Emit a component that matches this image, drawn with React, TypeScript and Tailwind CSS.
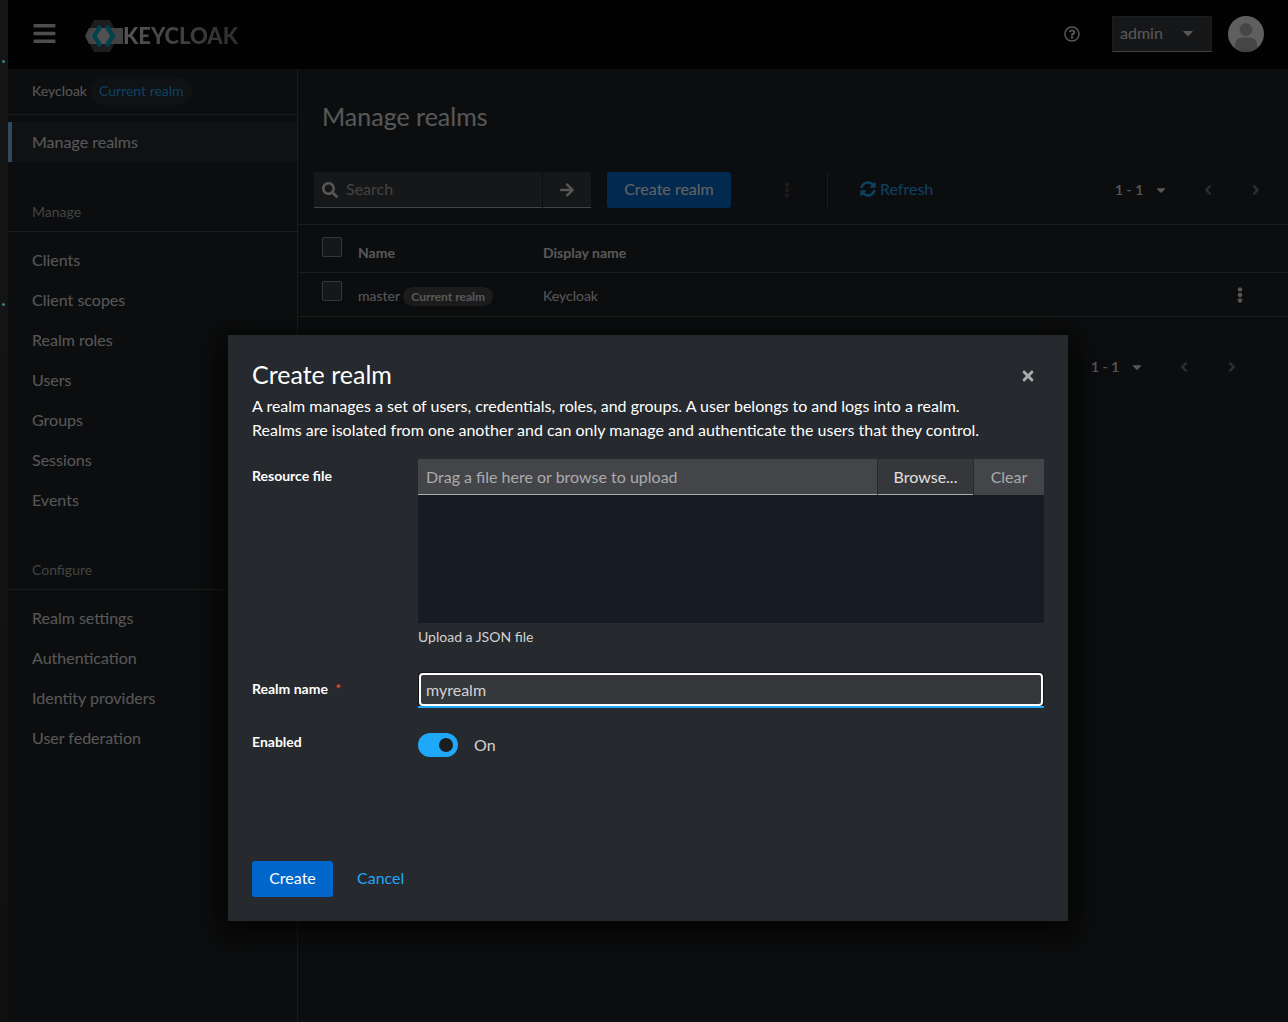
import { useState } from "react";
import {
  FaAngleLeft,
  FaAngleRight,
  FaArrowRight,
  FaBars,
  FaCaretDown,
  FaEllipsisV,
  FaRegQuestionCircle,
  FaSearch,
  FaSyncAlt,
  FaTimes,
} from "react-icons/fa";

const manageLinks = [
  "Clients",
  "Client scopes",
  "Realm roles",
  "Users",
  "Groups",
  "Sessions",
  "Events",
];

const configureLinks = [
  "Realm settings",
  "Authentication",
  "Identity providers",
  "User federation",
];

interface NavSectionProps {
  title: string;
  links: string[];
}

function Logo() {
  return (
    <a href="#" className="ml-7 flex items-center pt-1" aria-label="Keycloak">
      <svg width="38" height="32" viewBox="0 0 38 32">
        <path d="M9 0h16l8 16-8 16H9L1 16z" fill="#4b4b4b" />
        <path d="M4 8h34v16H4l-4-8z" fill="#a8a8a8" />
        <path d="M10 8h14l6 8-6 8H10l-5-8z" fill="#cfcfcf" />
        <path
          d="M14.500 7.500L9 16l5.500 8.500"
          fill="none"
          stroke="#00a5c4"
          strokeWidth="4.500"
          strokeLinejoin="round"
          strokeLinecap="round"
        />
        <path
          d="M22.500 7.500L28 16l-5.500 8.500"
          fill="none"
          stroke="#00a5c4"
          strokeWidth="4.500"
          strokeLinejoin="round"
          strokeLinecap="round"
        />
      </svg>
      <span className="bg-linear-to-r from-[#dcdcdc] to-[#707070] bg-clip-text font-[Lato,sans-serif] text-[22px] leading-8 font-black text-transparent">
        KEYCLOAK
      </span>
    </a>
  );
}

function Avatar() {
  return (
    <svg width="36" height="36" viewBox="0 0 36 36" role="img" aria-label="Avatar">
      <defs>
        <clipPath id="avatar">
          <circle cx="18" cy="18" r="18" />
        </clipPath>
      </defs>
      <g clipPath="url(#avatar)">
        <rect width="36" height="36" fill="#f5f5f5" />
        <circle cx="18" cy="13.500" r="6.500" fill="#b4b4b4" />
        <path d="M7 36v-7q0-7.500 7.500-7.500h7Q29 21.500 29 29v7z" fill="#b4b4b4" />
        <path d="M13 31v5h10v-5" fill="#a9a9a9" />
      </g>
    </svg>
  );
}

function NavSection({ title, links }: NavSectionProps) {
  return (
    <section className="pt-8">
      <h2 className="flex h-[38px] items-center border-b border-[#444548] px-6 pb-0.5 text-sm text-[#aaabac]">
        {title}
      </h2>
      <ul className="pt-2">
        {links.map((link) => (
          <li key={link}>
            <a href="#" className="block px-6 py-2 text-[#e0e0e0]">
              {link}
            </a>
          </li>
        ))}
      </ul>
    </section>
  );
}

function Pagination() {
  return (
    <div className="flex items-center text-[#e0e0e0]">
      <button className="flex w-[77px] items-center justify-between pr-4 pl-2 text-sm font-semibold">
        1 - 1
        <FaCaretDown size={14} />
      </button>
      <button
        disabled
        aria-label="Previous page"
        className="flex w-12 justify-center text-[#6a6e73]"
      >
        <FaAngleLeft size={16} />
      </button>
      <button
        disabled
        aria-label="Next page"
        className="flex w-12 justify-center text-[#6a6e73]"
      >
        <FaAngleRight size={16} />
      </button>
    </div>
  );
}

function Checkbox({ label }: { label: string }) {
  return (
    <input
      type="checkbox"
      aria-label={label}
      className="block size-5 appearance-none rounded-[2px] border border-[#8a8d90] bg-[#36373a]"
    />
  );
}

function CreateRealmModal() {
  const [name, setName] = useState("myrealm");
  const [enabled, setEnabled] = useState(true);

  return (
    <div className="absolute inset-y-0 right-0 left-2 flex items-start justify-center bg-[#030303]/62 pt-[335px]">
      <div
        role="dialog"
        aria-labelledby="modal-title"
        className="w-full max-w-[840px] bg-[#26292d] px-6 pt-[23px] pb-6 text-[#d2d2d2] shadow-[0_8px_24px_8px_rgba(3,3,3,0.7)]"
      >
        <header className="flex items-start justify-between">
          <h1 id="modal-title" className="text-[25px] leading-8 text-white">
            Create realm
          </h1>
          <button aria-label="Close" className="mt-[10px] mr-2 text-[#aaabac]">
            <FaTimes size={16} />
          </button>
        </header>
        <p className="pt-1 pr-12 text-white">
          A realm manages a set of users, credentials, roles, and groups. A user
          belongs to and logs into a realm.
          <br />
          Realms are isolated from one another and can only manage and
          authenticate the users that they control.
        </p>

        <form className="grid grid-cols-[150px_1fr] gap-x-4 pt-[17px]">
          <label htmlFor="file" className="pt-[7px] text-sm font-bold text-white">
            Resource file
          </label>
          <div className="mb-[25px]">
            <div className="flex h-9 gap-px">
              <input
                id="file"
                readOnly
                placeholder="Drag a file here or browse to upload"
                className="min-w-0 flex-1 border-b border-[#aaabac] bg-[#444548] px-2 outline-none placeholder:text-[#aaabac]"
              />
              <button
                type="button"
                className="w-[95px] border-b border-[#aaabac] bg-[#36373a] text-[#e0e0e0]"
              >
                Browse...
              </button>
              <button
                type="button"
                disabled
                className="w-[70px] bg-[#444548] text-[#aaabac]"
              >
                Clear
              </button>
            </div>
            <textarea
              aria-label="Resource file contents"
              className="block h-32 w-full resize-none bg-[#171b23] outline-none"
            />
            <p className="pt-1 text-sm">Upload a JSON file</p>
          </div>

          <label htmlFor="name" className="pt-[7px] text-sm font-bold text-white">
            Realm name <span className="ml-1 font-normal text-[#fe5142]">*</span>
          </label>
          <div className="mb-6 rounded-t border-b-2 border-[#1fa7f8] bg-[#151515] px-px pt-px">
            <input
              id="name"
              value={name}
              onChange={(e) => setName(e.target.value)}
              className="block h-[33px] w-full rounded border-2 border-white bg-[#36373a] px-[5px] outline-none"
            />
          </div>

          <label htmlFor="enabled" className="text-sm font-bold text-white">
            Enabled
          </label>
          <div className="flex items-center gap-4 pt-px">
            <input
              id="enabled"
              type="checkbox"
              role="switch"
              checked={enabled}
              onChange={(e) => setEnabled(e.target.checked)}
              className="flex h-6 w-10 appearance-none items-center rounded-full bg-[#aaabac] px-[5px] before:size-3.5 before:rounded-full before:bg-[#1b1d21] checked:justify-end checked:bg-[#1fa7f8]"
            />
            {enabled ? "On" : "Off"}
          </div>
        </form>

        <footer className="flex gap-2 pt-[104px]">
          <button className="h-9 w-[81px] rounded-[3px] bg-[#0066cc] pb-0.5 text-white">
            Create
          </button>
          <button className="h-9 px-4 pb-0.5 text-[#1fa7f8]">Cancel</button>
        </footer>
      </div>
    </div>
  );
}

export default function App() {
  return (
    <div className="relative flex min-h-screen bg-[#1b1d21] font-[Lato,sans-serif] text-base text-[#e0e0e0]">
      <div className="w-2 shrink-0 bg-linear-to-b from-[#161616] to-[#101010]">
        <div className="mt-[60px] ml-0.5 size-[3px] rounded-full bg-[#2f8585]" />
        <div className="mt-60 ml-0.5 size-[3px] rounded-full bg-[#2f8585]" />
      </div>

      <div className="flex min-w-0 flex-1 flex-col">
        <header className="flex h-[69px] items-center bg-black px-6 pb-0.5">
          <button aria-label="Global navigation" className="text-[#c8c8c8]">
            <FaBars size={25} />
          </button>
          <Logo />
          <div className="ml-auto flex items-center">
            <button aria-label="Help" className="mr-8">
              <FaRegQuestionCircle size={16} />
            </button>
            <button className="mr-4 flex h-9 w-[100px] items-center justify-between border border-[#444548] border-b-[#aaabac] bg-[#36373a] pr-[15px] pb-0.5 pl-[7px]">
              admin
              <FaCaretDown size={16} />
            </button>
            <Avatar />
          </div>
        </header>

        <div className="flex flex-1">
          <nav className="w-[290px] shrink-0 border-r border-[#444548]">
            <div className="flex h-[46px] items-center gap-1 border-b border-[#444548] px-6 pb-0.5 text-sm">
              Keycloak
              <span className="rounded-full bg-[#26292d] px-2 py-1 text-[#1fa7f8]">
                Current realm
              </span>
            </div>
            <div className="pt-[7px]">
              <a
                href="#"
                className="block border-l-4 border-[#73bcf7] bg-[#26292d] py-2 pl-5"
              >
                Manage realms
              </a>
            </div>
            <NavSection title="Manage" links={manageLinks} />
            <NavSection title="Configure" links={configureLinks} />
          </nav>

          <main className="min-w-0 flex-1">
            <h1 className="px-6 pt-[31px] text-[25px] leading-8">
              Manage realms
            </h1>

            <div className="flex items-center px-4 pt-10 pb-4">
              <div className="flex h-9 w-[277px] gap-px">
                <label className="flex min-w-0 flex-1 items-center gap-2 border-b border-[#aaabac] bg-[#36373a] px-2">
                  <FaSearch size={16} className="shrink-0" />
                  <input
                    aria-label="Search"
                    placeholder="Search"
                    className="w-full min-w-0 pb-0.5 outline-none placeholder:text-[#aaabac]"
                  />
                </label>
                <button
                  aria-label="Submit search"
                  className="flex w-12 items-center justify-center border-b border-[#aaabac] bg-[#36373a]"
                >
                  <FaArrowRight size={16} />
                </button>
              </div>
              <button className="ml-4 h-9 w-[124px] rounded-[3px] bg-[#0066cc] pb-0.5 text-white">
                Create realm
              </button>
              <button
                disabled
                aria-label="Actions"
                className="ml-12 text-[#444548]"
              >
                <FaEllipsisV size={16} />
              </button>
              <div className="mx-8 h-9 w-px bg-[#444548]" />
              <button className="flex items-center gap-1 pb-0.5 text-[#1fa7f8]">
                <FaSyncAlt size={16} />
                Refresh
              </button>
              <div className="ml-auto -mr-2">
                <Pagination />
              </div>
            </div>

            <table className="w-full text-left text-sm">
              <thead>
                <tr className="h-12 border-y border-[#444548]">
                  <th className="w-[60px] pb-1 pl-6">
                    <Checkbox label="Select all rows" />
                  </th>
                  <th className="w-[185px] pt-2 font-bold">Name</th>
                  <th className="pt-2 font-bold">Display name</th>
                  <th className="w-16" aria-label="Row actions" />
                </tr>
              </thead>
              <tbody>
                <tr className="h-11 border-b border-[#444548]">
                  <td className="pb-2 pl-6">
                    <Checkbox label="Select master" />
                  </td>
                  <td className="pt-0.5">
                    master{" "}
                    <span className="rounded-full bg-[#444548] px-2 py-0.5 text-xs font-bold">
                      Current realm
                    </span>
                  </td>
                  <td className="pt-0.5">Keycloak</td>
                  <td>
                    <button aria-label="Actions" className="ml-2 block">
                      <FaEllipsisV size={16} />
                    </button>
                  </td>
                </tr>
              </tbody>
            </table>

            <div className="flex justify-end px-8 pt-10">
              <Pagination />
            </div>
          </main>
        </div>
      </div>

      <CreateRealmModal />
    </div>
  );
}
